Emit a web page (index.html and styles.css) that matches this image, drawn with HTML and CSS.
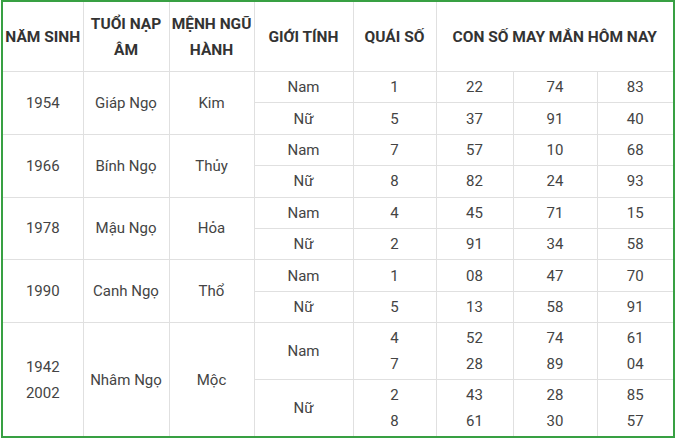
FILE: index.html
```html
<!DOCTYPE html>
<html lang="vi">
<head>
<meta charset="utf-8">
<link rel="stylesheet" href="styles.css">
</head>
<body>
<div class="frame">
<table class="luck">
<colgroup>
<col class="c1"><col class="c2"><col class="c3"><col class="c4"><col class="c5"><col class="c6"><col class="c7"><col class="c8">
</colgroup>
<thead>
<tr>
<th>NĂM SINH</th>
<th>TUỔI NẠP<br>ÂM</th>
<th>MỆNH NGŨ<br>HÀNH</th>
<th>GIỚI TÍNH</th>
<th>QUÁI SỐ</th>
<th colspan="3">CON SỐ MAY MẮN HÔM NAY</th>
</tr>
</thead>
<tbody>
<tr class="r1"><td rowspan="2">1954</td><td rowspan="2">Giáp Ngọ</td><td rowspan="2">Kim</td><td>Nam</td><td>1</td><td>22</td><td>74</td><td>83</td></tr>
<tr class="r1"><td>Nữ</td><td>5</td><td>37</td><td>91</td><td>40</td></tr>
<tr class="r1"><td rowspan="2">1966</td><td rowspan="2">Bính Ngọ</td><td rowspan="2">Thủy</td><td>Nam</td><td>7</td><td>57</td><td>10</td><td>68</td></tr>
<tr class="r1"><td>Nữ</td><td>8</td><td>82</td><td>24</td><td>93</td></tr>
<tr class="r1"><td rowspan="2">1978</td><td rowspan="2">Mậu Ngọ</td><td rowspan="2">Hỏa</td><td>Nam</td><td>4</td><td>45</td><td>71</td><td>15</td></tr>
<tr class="r1"><td>Nữ</td><td>2</td><td>91</td><td>34</td><td>58</td></tr>
<tr class="r1"><td rowspan="2">1990</td><td rowspan="2">Canh Ngọ</td><td rowspan="2">Thổ</td><td>Nam</td><td>1</td><td>08</td><td>47</td><td>70</td></tr>
<tr class="r1"><td>Nữ</td><td>5</td><td>13</td><td>58</td><td>91</td></tr>
<tr class="r2"><td rowspan="2">1942<br>2002</td><td rowspan="2">Nhâm Ngọ</td><td rowspan="2">Mộc</td><td>Nam</td><td>4<br>7</td><td>52<br>28</td><td>74<br>89</td><td>61<br>04</td></tr>
<tr class="r2"><td>Nữ</td><td>2<br>8</td><td>43<br>61</td><td>28<br>30</td><td>85<br>57</td></tr>
</tbody>
</table>
</div>
</body>
</html>
```

FILE: styles.css
```css
html, body {
  margin: 0;
  padding: 0;
  background: #ffffff;
}
body {
  padding-left: 1px;
  font-family: Roboto, "Liberation Sans", sans-serif;
}
.frame {
  width: 670px;
  border: 2px solid #38a043;
}
.luck {
  width: 670px;
  border-collapse: collapse;
  table-layout: fixed;
  border-style: hidden;
}
.c1 { width: 80px; }
.c2 { width: 86px; }
.c3 { width: 85px; }
.c4 { width: 99px; }
.c5 { width: 83px; }
.c6 { width: 77px; }
.c7 { width: 84px; }
.c8 { width: 76px; }
.luck th, .luck td {
  border: 1px solid #e0e0e0;
  text-align: center;
  vertical-align: middle;
  padding: 0;
  line-height: 26px;
}
.luck th {
  height: 69px;
  font-size: 15.5px;
  font-weight: 700;
  color: #333333;
}
.luck td {
  font-size: 15px;
  color: #444444;
}
.r1 td { height: 30.4px; }
.r2 td { height: 56px; }
```
